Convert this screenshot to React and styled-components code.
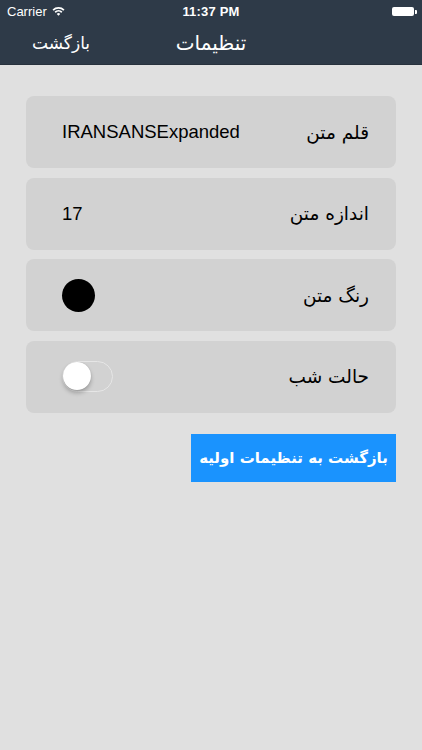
import styled, { createGlobalStyle } from "styled-components";

const Global = createGlobalStyle`
  html, body {
    margin: 0;
    padding: 0;
    background: #e0e0e0;
    font-family: "Liberation Sans", "DejaVu Sans", sans-serif;
  }
`;

const Screen = styled.div`
  width: 422px;
  height: 750px;
  background: #e0e0e0;
  overflow: hidden;
`;

// 상단 상태바 + 네비게이션
const Header = styled.div`
  background: #2e3a48;
  border-bottom: 1px solid #27313d;
  height: 65px;
  box-sizing: border-box;
`;

const StatusBar = styled.div`
  height: 22px;
  display: grid;
  grid-template-columns: 1fr auto 1fr;
  align-items: center;
  padding: 0 7px;
  color: #ffffff;
  font-size: 13px;
`;

const Carrier = styled.div`
  display: flex;
  align-items: center;
  gap: 5px;
`;

const Time = styled.div`
  font-weight: 600;
  letter-spacing: 0.2px;
`;

const Battery = styled.div`
  justify-self: end;
  display: flex;
  align-items: center;
  margin-right: 1px;
  width: 22px;
  height: 9px;
  position: relative;
  background: #ffffff;
  border-radius: 2px;

  &::after {
    content: "";
    position: absolute;
    right: -3px;
    top: 3px;
    width: 2px;
    height: 4px;
    background: #ffffff;
    border-radius: 0 1px 1px 0;
  }
`;

const NavBar = styled.div`
  height: 42px;
  display: grid;
  grid-template-columns: 1fr auto 1fr;
  align-items: center;
  padding: 0 32px;
  color: #ffffff;
  font-family: "DejaVu Sans", sans-serif;
`;

const BackLink = styled.div`
  font-size: 17px;
  direction: rtl;
  justify-self: start;
`;

const Title = styled.div`
  font-size: 20px;
  direction: rtl;
`;

const Content = styled.div`
  padding: 31px 26px 0;
  display: flex;
  flex-direction: column;
`;

const List = styled.div`
  display: flex;
  flex-direction: column;
  gap: 9.5px;
`;

const Row = styled.div`
  direction: rtl;
  height: 72px;
  background: #d2d2d2;
  border-radius: 8px;
  display: flex;
  align-items: center;
  justify-content: space-between;
  padding: 0 27px 0 36px;
`;

const Label = styled.div`
  font-family: "DejaVu Sans", sans-serif;
  font-size: 18.5px;
  color: #000;
`;

const Value = styled.div`
  direction: ltr;
  font-family: "Liberation Sans", "DejaVu Sans", sans-serif;
  font-size: 18.5px;
  color: #000;
`;

const Swatch = styled.div`
  width: 33px;
  height: 33px;
  border-radius: 50%;
  background: ${(p) => p.color};
`;

const Toggle = styled.div`
  width: 51px;
  height: 31px;
  box-sizing: border-box;
  border: 1.5px solid #e6e6e6;
  border-radius: 16px;
  position: relative;
`;

const Knob = styled.div`
  position: absolute;
  left: 0;
  top: 0;
  width: 28px;
  height: 28px;
  border-radius: 50%;
  background: #ffffff;
  box-shadow: 0 3px 4px rgba(0, 0, 0, 0.25), 0 0 1px rgba(0, 0, 0, 0.2);
`;

const ResetButton = styled.button`
  align-self: flex-end;
  margin-top: 21px;
  width: 205px;
  height: 48px;
  border: 0;
  border-radius: 0;
  background: #1a93fe;
  color: #ffffff;
  font-family: "DejaVu Sans", sans-serif;
  font-weight: bold;
  font-size: 15px;
  direction: rtl;
  padding: 0;
`;

const Wifi = () => (
  <svg width="13" height="10" viewBox="0 0 13 10">
    <path d="M0.5 3.4 A8.5 8.5 0 0 1 12.5 3.4 L11.3 4.7 A6.8 6.8 0 0 0 1.7 4.7 Z" fill="#fff" />
    <path d="M2.6 5.6 A5.5 5.5 0 0 1 10.4 5.6 L9.2 6.9 A3.8 3.8 0 0 0 3.8 6.9 Z" fill="#fff" />
    <path d="M4.8 7.9 A2.5 2.5 0 0 1 8.2 7.9 L6.5 9.8 Z" fill="#fff" />
  </svg>
);

const App = () => {
  const rows = [
    { label: "قلم متن", value: <Value>IRANSANSExpanded</Value> },
    { label: "اندازه متن", value: <Value>17</Value> },
    { label: "رنگ متن", value: <Swatch color="#000000" /> },
    {
      label: "حالت شب",
      value: (
        <Toggle>
          <Knob />
        </Toggle>
      ),
    },
  ];

  return (
    <>
      <Global />
      <Screen>
        <Header>
          <StatusBar>
            <Carrier>
              Carrier <Wifi />
            </Carrier>
            <Time>11:37 PM</Time>
            <Battery />
          </StatusBar>
          <NavBar>
            <BackLink>بازگشت</BackLink>
            <Title>تنظیمات</Title>
            <div />
          </NavBar>
        </Header>
        <Content>
          <List>
            {rows.map((r) => (
              <Row key={r.label}>
                <Label>{r.label}</Label>
                {r.value}
              </Row>
            ))}
          </List>
          <ResetButton>بازگشت به تنظیمات اولیه</ResetButton>
        </Content>
      </Screen>
    </>
  );
};

export default App;
